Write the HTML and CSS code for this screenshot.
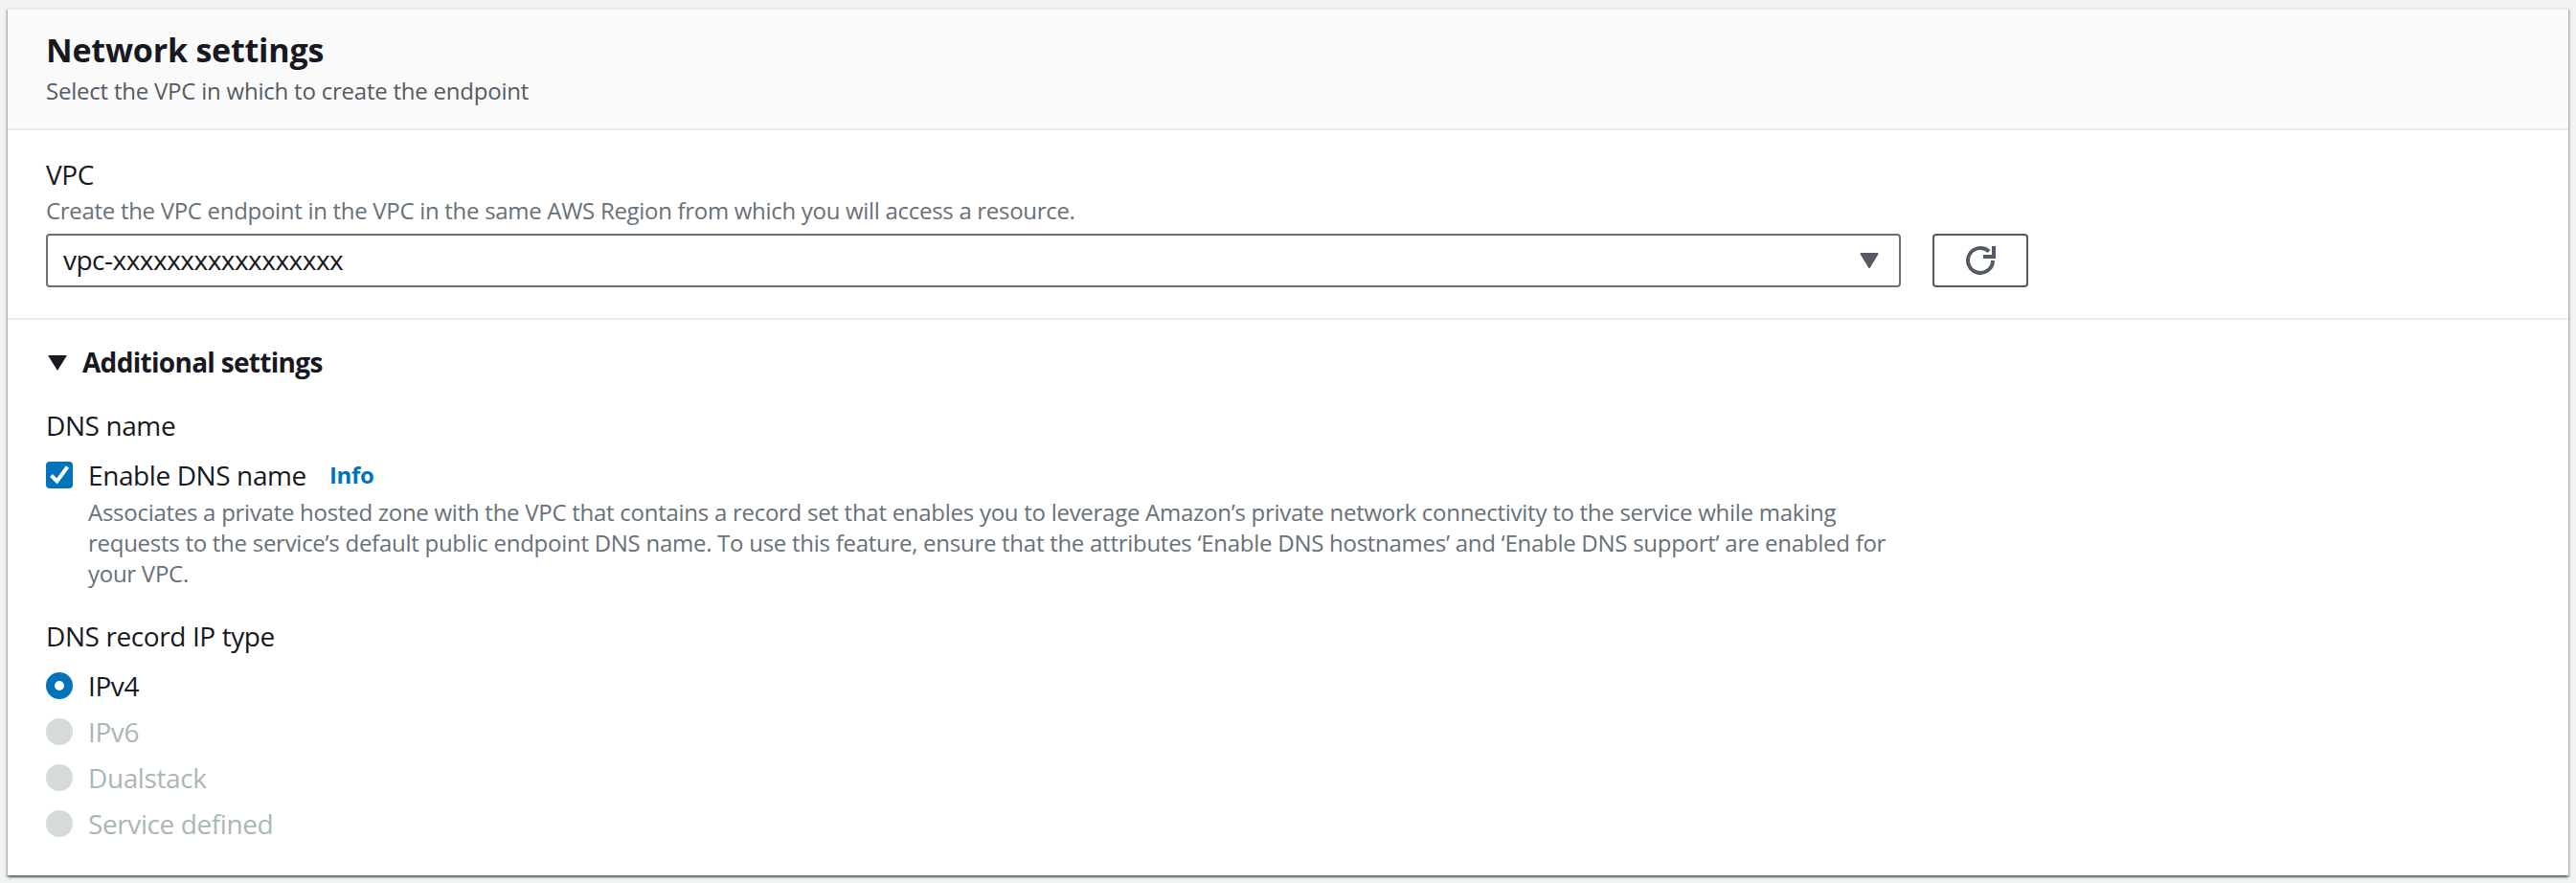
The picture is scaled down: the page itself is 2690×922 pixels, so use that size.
FILE: index.html
```html
<!DOCTYPE html>
<html lang="en">
<head>
  <meta charset="UTF-8">
  <title>Network settings</title>
  <link rel="stylesheet" href="styles.css">
</head>
<body>

  <div class="card">
    <div class="card-header">
      <h2>Network settings</h2>
      <p>Select the VPC in which to create the endpoint</p>
    </div>

    <div class="vpc-section">
      <div class="field-label">VPC</div>
      <div class="field-desc">Create the VPC endpoint in the VPC in the same AWS Region from which you will access a resource.</div>
      <div class="vpc-row">
        <div class="select">
          <span>vpc-xxxxxxxxxxxxxxxxx</span>
          <svg class="select-caret" width="20" height="16" viewBox="0 0 20 16"><path d="M1.5 1h17L10 15z" fill="#545b64" stroke="#545b64" stroke-width="2" stroke-linejoin="round"/></svg>
        </div>
        <button class="refresh">
          <svg width="32" height="32" viewBox="0 0 32 32" fill="none" stroke="#545b64" stroke-width="4">
            <path d="M29 16a13 13 0 1 1-4-9.4"/>
            <path d="M30 1v11H19"/>
          </svg>
        </button>
      </div>
    </div>

    <div class="extra-section">
      <div class="expander">
        <svg class="expander-caret" width="24" height="18" viewBox="0 0 24 18"><path d="M2 1h20L12 17z" fill="#16191f"/></svg>
        <span>Additional settings</span>
      </div>

      <div class="field-label">DNS name</div>
      <div class="check-row">
        <span class="checkbox">
          <svg width="28" height="28" viewBox="0 0 28 28" fill="none" stroke="#fff" stroke-width="4"><path d="M5.5 14.5l6 6 11-15"/></svg>
        </span>
        <span class="option-label">Enable DNS name</span>
        <a class="info">Info</a>
      </div>
      <div class="check-desc">Associates a private hosted zone with the VPC that contains a record set that enables you to leverage Amazon’s private network connectivity to the service while making requests to the service’s default public endpoint DNS name. To use this feature, ensure that the attributes ‘Enable DNS hostnames’ and ‘Enable DNS support’ are enabled for your VPC.</div>

      <div class="field-label ip-label">DNS record IP type</div>
      <div class="radio-group">
        <div class="radio-row"><span class="radio checked"></span><span class="option-label">IPv4</span></div>
        <div class="radio-row disabled"><span class="radio"></span><span class="option-label">IPv6</span></div>
        <div class="radio-row disabled"><span class="radio"></span><span class="option-label">Dualstack</span></div>
        <div class="radio-row disabled"><span class="radio"></span><span class="option-label">Service defined</span></div>
      </div>
    </div>
  </div>

</body>
</html>
```

FILE: styles.css
```css
body {
  margin: 0;
  padding: 8px;
  background-color: #f2f3f3;
  font-family: "Open Sans", sans-serif;
  font-size: 28px;
  line-height: 40px;
  letter-spacing: -0.4px;
  color: #16191f;
}

.card {
  background-color: #fff;
  height: 906px;
  border-top: 2px solid #eaeded;
  box-sizing: border-box;
  box-shadow: 0 2px 2px 0 rgba(0, 28, 36, 0.5), 2px 2px 2px 0 rgba(0, 28, 36, 0.15), -2px 2px 2px 0 rgba(0, 28, 36, 0.15);
}

.card-header {
  background-color: #fafafa;
  height: 126px;
  padding: 20px 40px 0;
  box-sizing: border-box;
  border-bottom: 2px solid #eaeded;
}

.card-header h2 {
  margin: 0;
  font-size: 34px;
  line-height: 44px;
  font-weight: 700;
  letter-spacing: -0.2px;
}

.card-header p {
  margin: 5px 0 0;
  font-size: 24px;
  line-height: 32px;
  letter-spacing: -0.22px;
  color: #545b64;
}

.vpc-section {
  height: 198px;
  padding: 26px 40px 0;
  box-sizing: border-box;
  border-bottom: 2px solid #eaeded;
}

.field-desc {
  margin-top: 2px;
  font-size: 24px;
  line-height: 32px;
  letter-spacing: -0.3px;
  color: #687078;
}

.vpc-row {
  display: flex;
  gap: 33px;
  margin-top: 8px;
}

.select {
  width: 1937px;
  height: 56px;
  box-sizing: border-box;
  border: 2px solid #687078;
  border-radius: 4px;
  padding: 0 21px 2px 16px;
  display: flex;
  justify-content: space-between;
  align-items: center;
  letter-spacing: -0.5px;
}

.select-caret {
  margin-top: 2px;
}

.refresh {
  width: 100px;
  height: 56px;
  padding: 0;
  background-color: #fff;
  border: 2px solid #545b64;
  border-radius: 4px;
  display: flex;
  justify-content: center;
  align-items: center;
}

.extra-section {
  padding: 24px 40px 0;
}

.expander {
  display: flex;
  align-items: center;
  gap: 14px;
  font-weight: 700;
  letter-spacing: -0.7px;
  margin-bottom: 26px;
}

.expander-caret {
  margin-top: 2px;
}

.check-row {
  display: flex;
  align-items: center;
  margin-top: 12px;
}

.checkbox {
  width: 28px;
  height: 28px;
  background-color: #0073bb;
  border-radius: 4px;
  display: flex;
  margin-right: 16px;
}

.info {
  margin-left: 24px;
  font-size: 24px;
  font-weight: 700;
  letter-spacing: -0.3px;
  color: #0073bb;
}

.check-desc {
  margin: 3px 0 0 44px;
  width: 1885px;
  font-size: 24px;
  line-height: 32px;
  letter-spacing: -0.27px;
  color: #687078;
}

.ip-label {
  margin-top: 29px;
}

.radio-group {
  margin-top: 12px;
  display: flex;
  flex-direction: column;
  gap: 8px;
}

.radio-row {
  display: flex;
  align-items: center;
}

.radio {
  width: 28px;
  height: 28px;
  border-radius: 50%;
  background-color: #d5dbdb;
  margin-right: 16px;
  box-sizing: border-box;
}

.radio.checked {
  background-color: #fff;
  border: 9px solid #0073bb;
}

.disabled .option-label {
  color: #aab7b8;
}
```
